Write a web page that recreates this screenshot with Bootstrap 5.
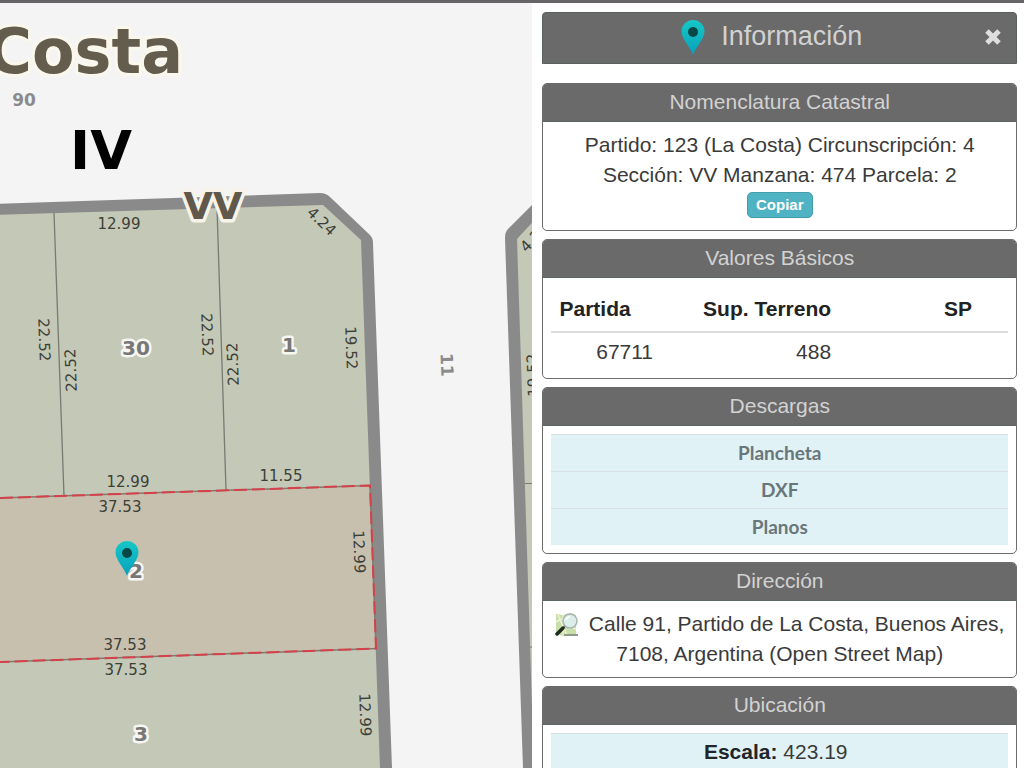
<!DOCTYPE html>
<html lang="es">
<head>
<meta charset="utf-8">
<meta name="viewport" content="width=device-width, initial-scale=1">
<title>Información catastral</title>
<link href="https://cdn.jsdelivr.net/npm/bootstrap@5.3.0/dist/css/bootstrap.min.css" rel="stylesheet">
<style>
  body { font-family: "Liberation Sans", Arial, sans-serif; font-size: 21px; line-height: 30px; color: #3a3a3a; border-top: 3px solid #676467; }
  .map-pane { flex: 1 1 0; background: #f4f4f4; }
  .info-pane { flex: 0 0 48%; padding: 9px 7px 0 10px; background: #fff; }
  .map-pane text { font-family: "DejaVu Sans", sans-serif; font-size: 15px; fill: #3c3f36; text-anchor: middle; }
  .map-pane .lot-no { font-size: 20px; font-weight: 700; fill: #777; stroke: #f6f6f2; stroke-width: 5px; paint-order: stroke; stroke-linejoin: round; }
  .map-pane .street { font-size: 17px; font-weight: 700; fill: #8b8b8b; }
  .map-pane .place { font-size: 62px; font-weight: 700; fill: #645d4d; stroke: #faf7ec; stroke-width: 6px; paint-order: stroke; stroke-linejoin: round; text-anchor: end; }
  .map-pane .district { font-size: 54px; font-weight: 700; fill: #000; }
  .map-pane .section-name { font-size: 38px; font-weight: 700; fill: #5f584b; stroke: #f7f3e8; stroke-width: 7px; paint-order: stroke; stroke-linejoin: round; }
  .title-bar { height: 52px; margin-bottom: 19px; background: #6a6a6a; border: 1px solid #5a5f5f; border-radius: 4px 4px 0 0; color: #d2d2d2; }
  .title-bar h1 { font-size: 27px; line-height: 30px; }
  .title-bar button { width: 18px; height: 18px; margin-right: 14px; }
  .info-card { border: 1px solid #6c6c6c; border-radius: 5px; margin-bottom: 8px; }
  .info-card > .card-header { background: #6a6a6a; color: #d2d2d2; font-size: 21px; line-height: 30px; padding: 3px 8px 4px; border-bottom: 1px solid #5c6664; border-radius: 4px 4px 0 0; margin: 0; font-weight: 400; }
  .info-card > .card-body { padding: 8px; }
  .btn-copy { font-size: 15px; line-height: 20px; font-weight: 700; padding: 2px 8px; color: #fff; background: #4fb3c3; border: 1px solid #439eac; border-radius: 5px; }
  .copy-row { padding: 2px 0 4px; }
  .values-table { --bs-table-bg: transparent; color: #3a3a3a; }
  .values-table th { color: #222; padding: 8px 8px 7px; line-height: 30px; border-bottom: 2px solid #ddd; }
  .values-table th.sp-col { padding-right: 36px; }
  .values-table td { padding: 4px 8px 3px; line-height: 30px; border: 0; }
  .info-list > li { background: #e0f2f5; border-top: 1px solid #d6e0e2; padding: 3px 8px; line-height: 30px; }
  .download-list > li { font-family: Lato, sans-serif; font-size: 19px; font-weight: 700; }
  .download-list a { color: #69767a; text-decoration: none; }
</style>
</head>
<body class="vh-100 d-flex flex-column overflow-hidden">
<main class="d-flex flex-grow-1 overflow-hidden">
  <section class="map-pane overflow-hidden" aria-label="Mapa">
    <svg class="d-block w-100 h-100" viewBox="0 3 533 765" preserveAspectRatio="xMinYMin slice">
      <defs>
        <linearGradient id="pinFill" x1="0" y1="0" x2="0" y2="1"><stop offset="0" stop-color="#16c8c6"/><stop offset="1" stop-color="#08a0bd"/></linearGradient>
        <symbol id="pin" viewBox="0 0 24 36"><path d="M12 35C10 28 .5 19 .5 11.500a11.500 11.500 0 0 1 23 0C23.500 19 14 28 12 35Z" fill="url(#pinFill)"/><circle cx="12" cy="12" r="5" fill="#074748"/></symbol>
      </defs>
      <path d="M-5 204 320 193Q326 193 330 197L370 235Q373 238 373 243L392 768H-5Z" fill="#8a8a8a"/>
      <path d="M-5 215 323 205 361 240 380 768H-5Z" fill="#c4c8b7"/>
      <path d="M-5 498 370 485.500 376 648.500-5 662Z" fill="#c8c0ae"/>
      <path d="M54 213 64 496M217 208 226 490" stroke="#777b72" stroke-width="1.300" fill="none"/>
      <path d="M0 498 370 485.500 376 648.500 0 662" stroke="#7d7a70" stroke-width="1.500" fill="none"/>
      <path d="M0 498 370 485.500 376 648.500 0 662" stroke="#d5404b" stroke-width="2" stroke-dasharray="13 5" fill="none"/>
      <path d="M540 197 508 229Q505 232 505 238L523 768H540Z" fill="#8a8a8a"/>
      <path d="M540 214 517 239 534 768H540Z" fill="#c4c8b7"/>
      <path d="M525 483.500H533M530 647H533" stroke="#777b72"/>
      <text class="place" x="183" y="73">La Costa</text>
      <text class="street" x="24" y="106">90</text>
      <text class="district" x="101" y="169">IV</text>
      <text class="section-name" x="213" y="219">VV</text>
      <text x="119" y="229">12.99</text>
      <text x="128" y="487">12.99</text>
      <text x="281" y="481">11.55</text>
      <text x="120" y="512">37.53</text>
      <text x="125" y="650">37.53</text>
      <text x="126" y="675">37.53</text>
      <text transform="translate(39 340) rotate(88)">22.52</text>
      <text transform="translate(76 370) rotate(-92)">22.52</text>
      <text transform="translate(202 335) rotate(88)">22.52</text>
      <text transform="translate(238 364) rotate(-92)">22.52</text>
      <text transform="translate(346 348) rotate(88)">19.52</text>
      <text transform="translate(354 552) rotate(88)">12.99</text>
      <text transform="translate(360 715) rotate(88)">12.99</text>
      <text transform="translate(318 225) rotate(44)">4.24</text>
      <text transform="translate(538 241) rotate(-46)">4.24</text>
      <text transform="translate(538 375) rotate(-92)">19.52</text>
      <text class="street" transform="translate(441 365) rotate(88)">11</text>
      <text class="lot-no" x="136" y="355">30</text>
      <text class="lot-no" x="289" y="352">1</text>
      <text class="lot-no" x="136" y="578">2</text>
      <text class="lot-no" x="141" y="741">3</text>
      <use href="#pin" x="115" y="541" width="24" height="36"/>
    </svg>
  </section>

  <aside class="info-pane overflow-hidden">
    <header class="title-bar d-flex align-items-center">
      <div class="flex-grow-1 d-flex align-items-center justify-content-center gap-3 ps-3">
        <svg width="24" height="36" aria-hidden="true"><use href="#pin"/></svg>
        <h1 class="mb-0 pb-1 fw-normal">Información</h1>
      </div>
      <button type="button" class="btn p-0 border-0 d-flex" aria-label="Cerrar">
        <svg width="18" height="18" viewBox="0 0 18 18" aria-hidden="true"><path d="M3 2 15 14M15 2 3 14" stroke="#dedede" stroke-width="5"/></svg>
      </button>
    </header>

    <section class="card info-card text-center">
      <h2 class="card-header">Nomenclatura Catastral</h2>
      <div class="card-body">
        <div>Partido: 123 (La Costa) Circunscripción: 4<br>Sección: VV Manzana: 474 Parcela: 2</div>
        <div class="copy-row d-flex justify-content-center"><button type="button" class="btn btn-copy">Copiar</button></div>
      </div>
    </section>

    <section class="card info-card">
      <h2 class="card-header text-center">Valores Básicos</h2>
      <div class="card-body">
        <table class="table values-table mb-0">
          <colgroup><col style="width:24%"><col style="width:39%"><col style="width:37%"></colgroup>
          <thead><tr><th class="text-start">Partida</th><th class="text-end">Sup. Terreno</th><th class="text-end sp-col">SP</th></tr></thead>
          <tbody><tr><td class="text-end">67711</td><td class="text-end">488</td><td></td></tr></tbody>
        </table>
      </div>
    </section>

    <section class="card info-card text-center">
      <h2 class="card-header">Descargas</h2>
      <div class="card-body">
        <ul class="list-unstyled info-list download-list mb-0">
          <li><a href="#plancheta">Plancheta</a></li>
          <li><a href="#dxf">DXF</a></li>
          <li><a href="#planos">Planos</a></li>
        </ul>
      </div>
    </section>

    <section class="card info-card text-center">
      <h2 class="card-header">Dirección</h2>
      <div class="card-body">
        <svg class="me-1" width="24" height="24" viewBox="0 0 24 24" role="img" aria-label="OpenStreetMap">
          <path d="M1 1 8 2 15 0 21 2V22L15 21 8 23 1 21Z" fill="#c7dfa9"/>
          <path d="M1 9 8 5 13 13 21 16M8 2V22M3 2 12 22" stroke="#eff2d2" stroke-width="1.500" fill="none"/>
          <path d="M9 22H23" stroke="#8f9a87" stroke-width="2"/>
          <circle cx="15" cy="8" r="7" fill="#dceee9" stroke="#a8b5b1" stroke-width="1.500"/>
          <path d="M11 7a4 4 0 0 1 4-3" stroke="#fff" stroke-width="1.500" fill="none"/>
          <path d="M10 13 7 16" stroke="#89908a" stroke-width="2"/><path d="M8 15 2 21" stroke="#202a20" stroke-width="3.500" stroke-linecap="round"/>
        </svg>
        Calle 91, Partido de La Costa, Buenos Aires, 7108, Argentina (Open Street Map)
      </div>
    </section>

    <section class="card info-card text-center">
      <h2 class="card-header">Ubicación</h2>
      <div class="card-body">
        <ul class="list-unstyled info-list mb-0">
          <li class="pe-3"><strong class="text-dark">Escala:</strong> 423.19</li>
        </ul>
      </div>
    </section>
  </aside>
</main>
<script src="https://cdn.jsdelivr.net/npm/bootstrap@5.3.0/dist/js/bootstrap.bundle.min.js"></script>
</body>
</html>
